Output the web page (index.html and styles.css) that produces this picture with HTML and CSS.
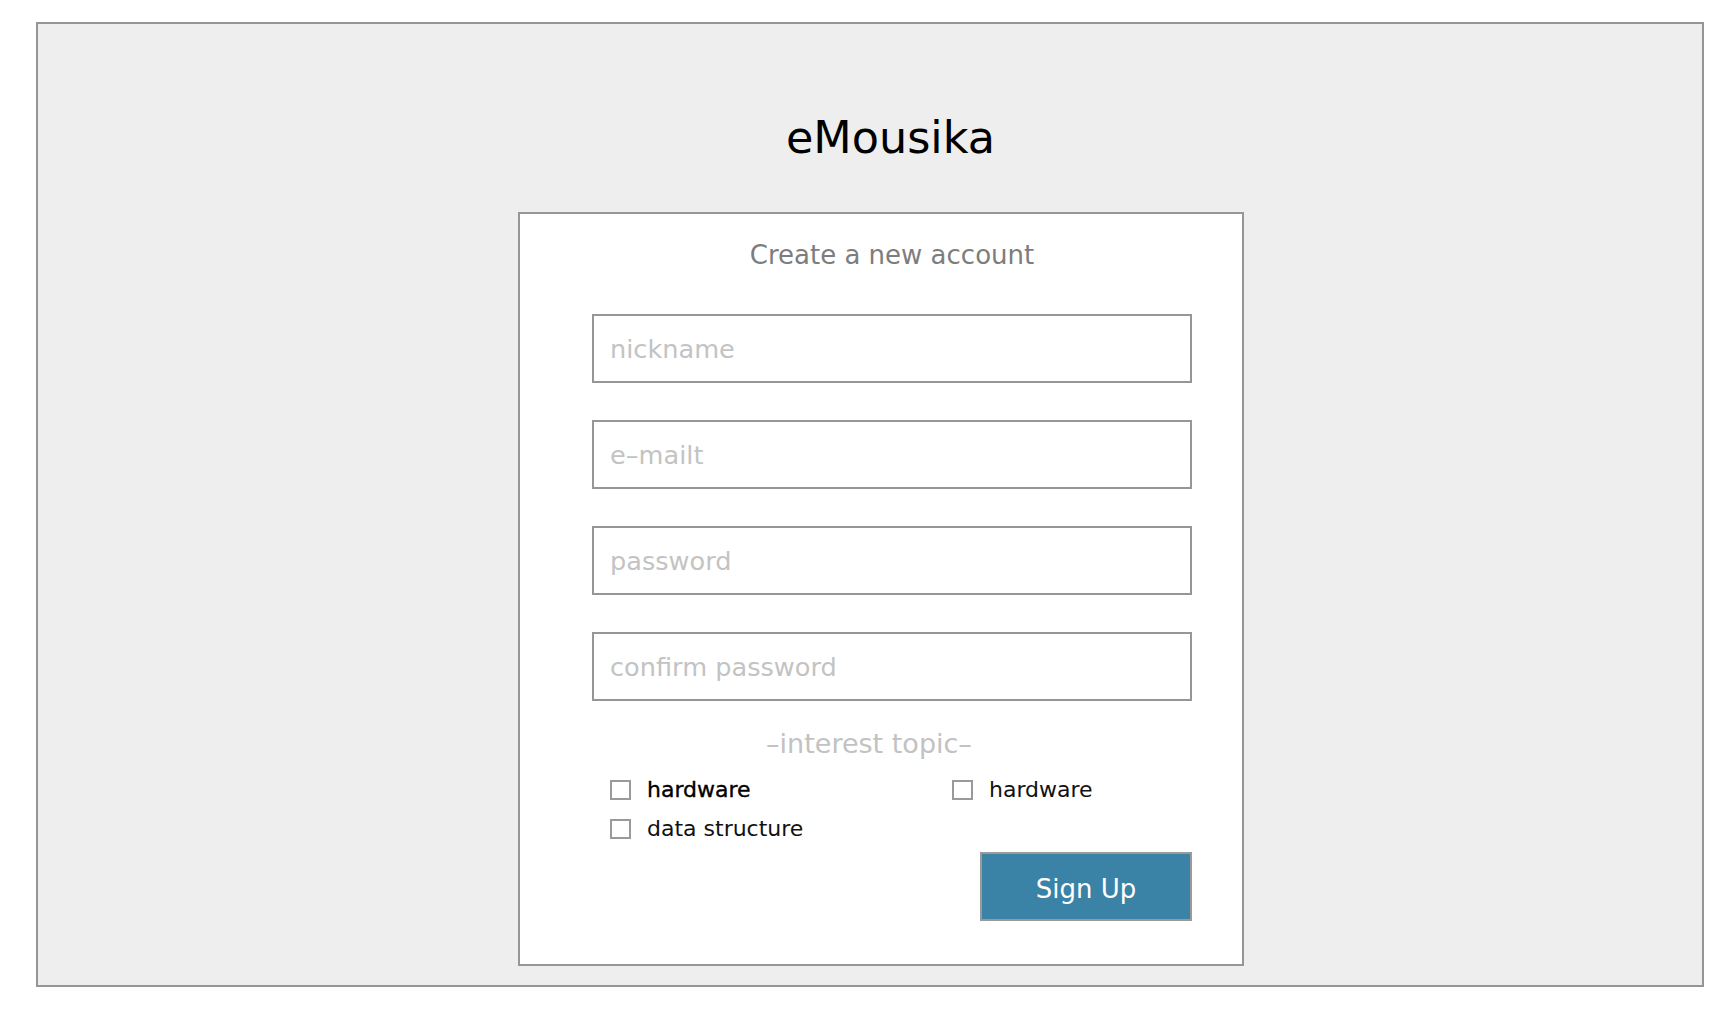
FILE: index.html
```html
<!DOCTYPE html>
<html lang="en">
<head>
<meta charset="utf-8">
<title>eMousika - Sign Up</title>
<link rel="stylesheet" href="styles.css">
</head>
<body>
<div class="page">
  <div class="frame">
    <h1 class="brand">eMousika</h1>
    <form class="card" onsubmit="return false;">
      <h2 class="card-title">Create a new account</h2>
      <div class="fields">
        <input class="field" type="text" placeholder="nickname">
        <input class="field" type="text" placeholder="e–mailt">
        <input class="field" type="password" placeholder="password">
        <input class="field" type="password" placeholder="confirm password">
      </div>
      <div class="topic-title">–interest topic–</div>
      <div class="topics">
        <label class="topic"><input class="check" type="checkbox"><span class="topic-text strong">hardware</span></label>
        <label class="topic"><input class="check" type="checkbox"><span class="topic-text">hardware</span></label>
        <label class="topic"><input class="check" type="checkbox"><span class="topic-text">data structure</span></label>
      </div>
      <button class="submit" type="submit">Sign Up</button>
    </form>
  </div>
</div>
</body>
</html>
```
FILE: styles.css
```css
html, body {
  margin: 0;
  padding: 0;
  background: #ffffff;
}

body {
  font-family: "DejaVu Sans", "Liberation Sans", sans-serif;
}

.page {
  padding: 22px 32px 31px 36px;
}

.frame {
  box-sizing: border-box;
  height: 965px;
  border: 2px solid #959595;
  background: #eeeeee;
  display: flex;
  flex-direction: column;
  align-items: flex-start;
}

.brand {
  align-self: stretch;
  margin: 88px 0 0 0;
  padding-left: 41px;
  font-size: 44.5px;
  line-height: 52px;
  font-weight: normal;
  color: #000000;
  text-align: center;
}

.card {
  box-sizing: border-box;
  width: 726px;
  height: 754px;
  margin: 48px 0 0 480px;
  padding: 26px 50px 0 72px;
  background: #ffffff;
  border: 2px solid #969696;
  display: flex;
  flex-direction: column;
}

.card-title {
  margin: 0;
  font-size: 26px;
  line-height: 30px;
  font-weight: normal;
  color: #7d7d7d;
  text-align: center;
}

.fields {
  margin-top: 44px;
  display: flex;
  flex-direction: column;
  gap: 37px;
}

.field {
  box-sizing: border-box;
  width: 600px;
  height: 69px;
  margin: 0;
  padding: 0 16px;
  border: 2px solid #969696;
  border-radius: 0;
  background: #ffffff;
  font-family: "DejaVu Sans", "Liberation Sans", sans-serif;
  font-size: 25.6px;
  color: #333333;
  outline: none;
}

.field::placeholder {
  color: #c3c3c3;
  opacity: 1;
}

.topic-title {
  margin-top: 28px;
  padding-right: 46px;
  font-size: 27px;
  line-height: 30px;
  color: #c2c2c2;
  text-align: center;
}

.topics {
  margin-top: 18px;
  padding-left: 18px;
  display: grid;
  grid-template-columns: 342px 1fr;
  row-gap: 13px;
}

.topic {
  display: flex;
  align-items: center;
  height: 26px;
  cursor: pointer;
}

.check {
  appearance: none;
  -webkit-appearance: none;
  box-sizing: border-box;
  width: 21px;
  height: 20px;
  margin: 0 16px 0 0;
  border: 2px solid #9a9a9a;
  border-radius: 0;
  background: #ffffff;
  flex: none;
}

.topic-text {
  font-size: 22px;
  line-height: 26px;
  color: #111111;
}

.topic-text.strong {
  color: #000000;
  -webkit-text-stroke: 0.35px #000000;
}

.submit {
  align-self: flex-end;
  box-sizing: border-box;
  width: 212px;
  height: 69px;
  margin-top: 10px;
  padding: 4px 0 0 0;
  border: 2px solid #9a9a9a;
  border-radius: 0;
  background: #3a83a6;
  color: #ffffff;
  font-family: "DejaVu Sans", "Liberation Sans", sans-serif;
  font-size: 26px;
  line-height: 30px;
  cursor: pointer;
}
```
